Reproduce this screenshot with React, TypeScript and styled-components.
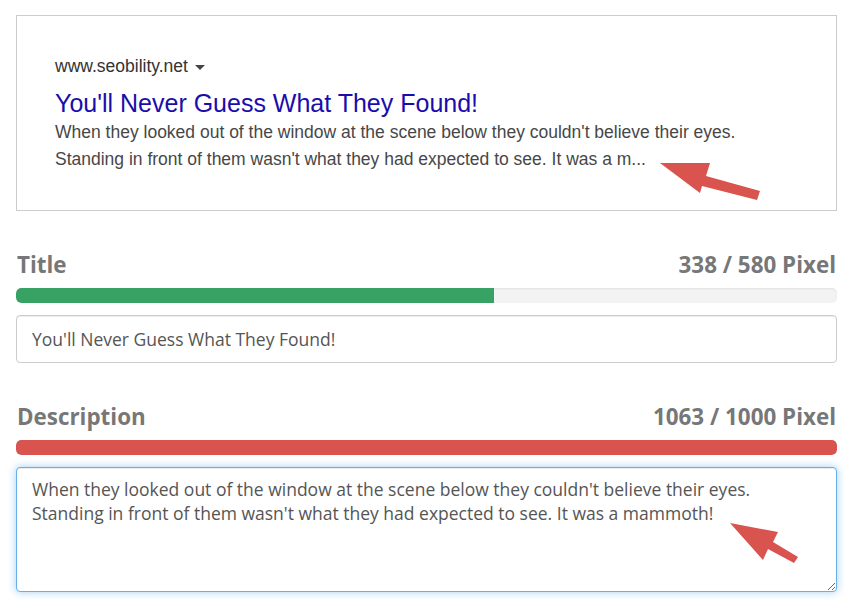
import React from "react";
import styled, { createGlobalStyle } from "styled-components";

const GlobalStyle = createGlobalStyle`
  html, body {
    margin: 0;
    padding: 0;
    background: #ffffff;
  }
  * { box-sizing: border-box; }
`;

const Page = styled.div`
  position: relative;
  width: 852px;
  min-height: 607px;
  padding: 15px 15px 0 16px;
  font-family: "Open Sans", "Liberation Sans", sans-serif;
`;

const Preview = styled.div`
  border: 1px solid #cccccc;
  padding: 38px 38px 37px 38px;
  font-family: "Liberation Sans", Arial, sans-serif;
  background: #ffffff;
`;

const UrlLine = styled.div`
  display: flex;
  align-items: center;
  font-size: 17.5px;
  line-height: 24px;
  color: #333333;
`;

const Caret = styled.span`
  display: inline-block;
  width: 0;
  height: 0;
  margin-left: 7px;
  margin-top: 2px;
  border-left: 5px solid transparent;
  border-right: 5px solid transparent;
  border-top: 5px solid #444444;
`;

const SerpTitle = styled.div`
  margin-top: 10px;
  font-size: 25px;
  line-height: 31px;
  color: #1a0dab;
`;

const SerpDesc = styled.div`
  font-size: 17.5px;
  line-height: 27px;
  color: #474747;
`;

const Section = styled.section`
  margin-top: 38px;
`;

const LabelRow = styled.div`
  display: flex;
  justify-content: space-between;
  align-items: baseline;
  font-weight: 700;
  font-size: 22.4px;
  line-height: 31px;
  color: #777777;
  padding: 0 1px;
`;

const Track = styled.div`
  margin-top: 8px;
  height: 15px;
  border-radius: 5px;
  background: #f3f3f3;
  box-shadow: inset 0 1px 2px rgba(0, 0, 0, 0.08);
  overflow: hidden;
`;

const Fill = styled.div<{ $tone: "ok" | "bad" }>`
  height: 100%;
  background: ${(p) => (p.$tone === "ok" ? "#38a265" : "#d9534f")};
  border-radius: ${(p) => (p.$tone === "ok" ? "5px 0 0 5px" : "5px")};
`;

const TextInput = styled.input`
  display: block;
  width: 100%;
  margin-top: 12px;
  height: 48px;
  padding: 11px 15px;
  border: 1px solid #cccccc;
  border-radius: 4px;
  font-family: "Open Sans", sans-serif;
  font-size: 17.5px;
  line-height: 24px;
  color: #555555;
  background: #ffffff;
  box-shadow: inset 0 1px 1px rgba(0, 0, 0, 0.075);
  outline: none;
`;

const TextArea = styled.textarea`
  display: block;
  width: 100%;
  margin: 12px 0 0 0;
  height: 125px;
  padding: 9px 15px;
  border: 1px solid #66afe9;
  border-radius: 4px;
  font-family: "Open Sans", sans-serif;
  font-size: 17.5px;
  line-height: 24px;
  color: #555555;
  background: #ffffff;
  box-shadow: inset 0 1px 1px rgba(0, 0, 0, 0.075), 0 0 8px rgba(102, 175, 233, 0.6);
  outline: none;
  resize: vertical;
`;

const Overlay = styled.svg`
  position: absolute;
  left: 0;
  top: 0;
  pointer-events: none;
`;

type Meter = { label: string; value: number; max: number };

const title: Meter = { label: "Title", value: 338, max: 580 };
const desc: Meter = { label: "Description", value: 1063, max: 1000 };

const titleText = "You'll Never Guess What They Found!";
const descText =
  "When they looked out of the window at the scene below they couldn't believe their eyes. Standing in front of them wasn't what they had expected to see. It was a mammoth!";

function MeterHead({ m }: { m: Meter }) {
  const pct = Math.min(m.value / m.max, 1) * 100;
  const tone = m.value > m.max ? "bad" : "ok";
  return (
    <>
      <LabelRow>
        <span>{m.label}</span>
        <span>
          {m.value} / {m.max} Pixel
        </span>
      </LabelRow>
      <Track>
        <Fill $tone={tone} style={{ width: `${pct}%` }} />
      </Track>
    </>
  );
}

export default function App() {
  return (
    <Page>
      <GlobalStyle />
      <Preview>
        <UrlLine>
          www.seobility.net
          <Caret />
        </UrlLine>
        <SerpTitle>{titleText}</SerpTitle>
        <SerpDesc>
          When they looked out of the window at the scene below they couldn't believe their eyes.
          <br />
          Standing in front of them wasn't what they had expected to see. It was a m...
        </SerpDesc>
      </Preview>

      <Section>
        <MeterHead m={title} />
        <TextInput readOnly value={titleText} />
      </Section>

      <Section>
        <MeterHead m={desc} />
        <TextArea readOnly value={descText} />
      </Section>

      <Overlay width="852" height="607" viewBox="0 0 852 607">
        <polygon
          points="660,163 710,163 706,176 760,191 757,200 702,186 700,193"
          fill="#d9534f"
        />
        <polygon
          points="730,523 778,532 773,542 798,557 794,563 768,549 763,560"
          fill="#d9534f"
        />
      </Overlay>
    </Page>
  );
}
